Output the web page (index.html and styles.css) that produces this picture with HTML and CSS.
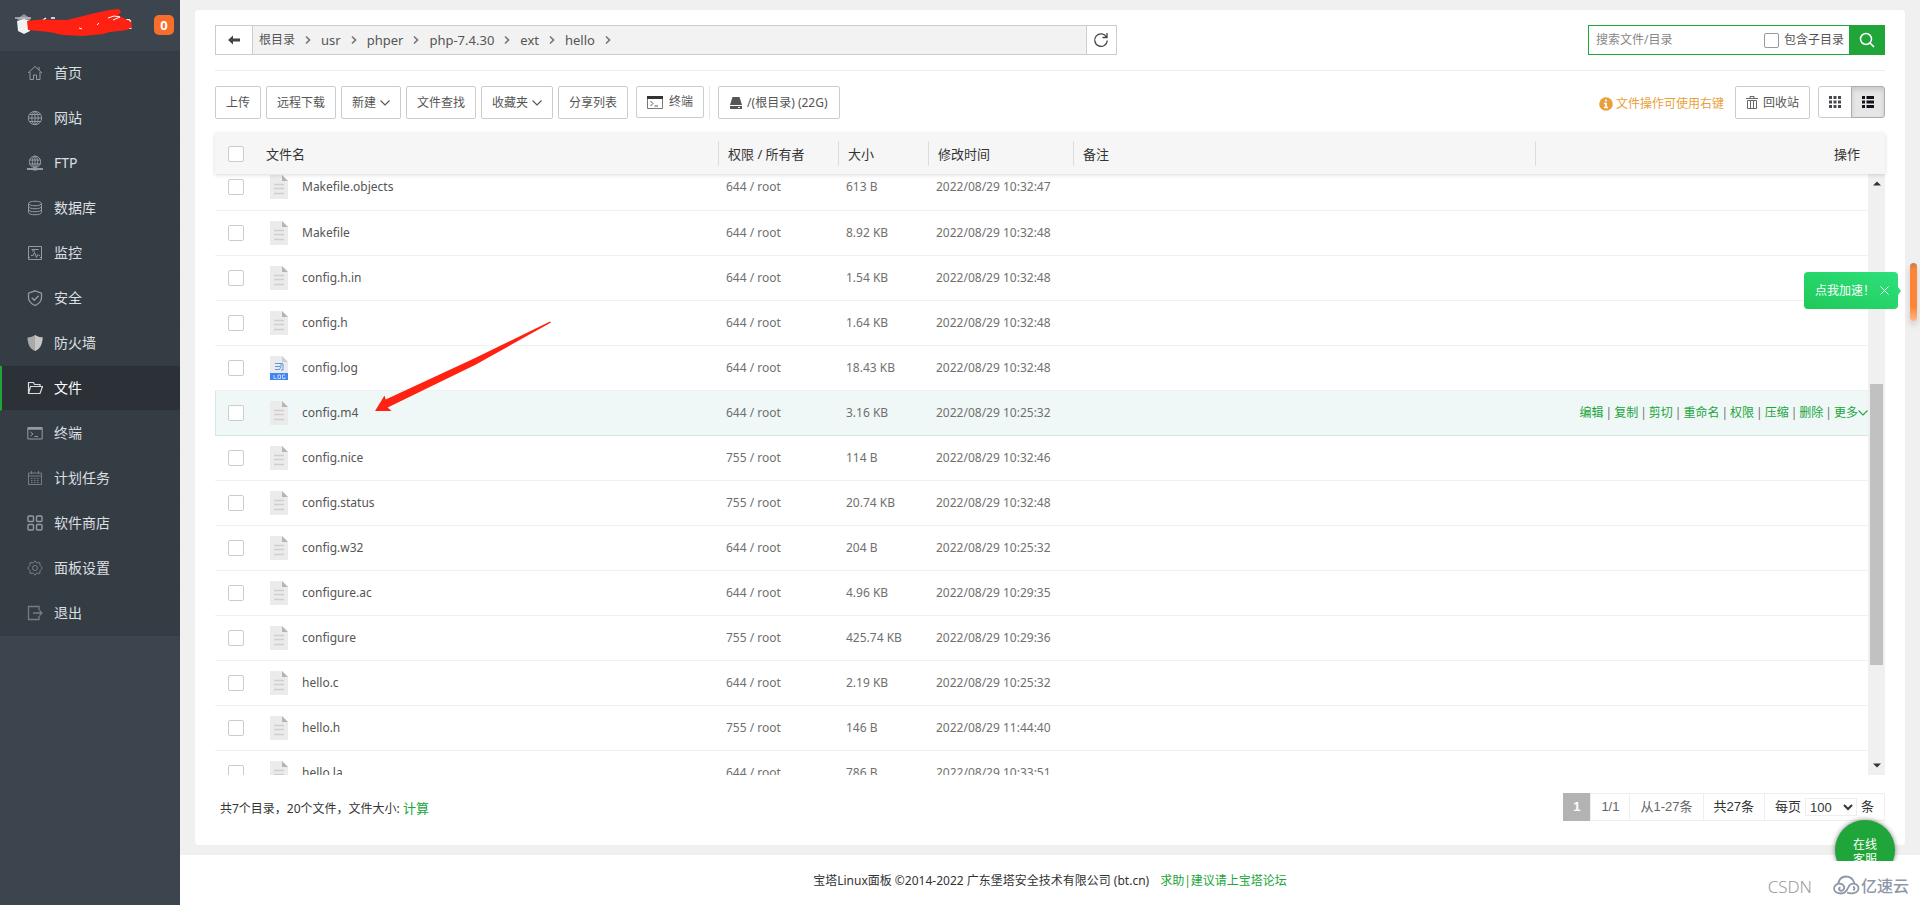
FILE: index.html
```
<!DOCTYPE html>
<html lang="zh-CN">
<head>
<meta charset="utf-8">
<title>文件 - 宝塔Linux面板</title>
<link rel="stylesheet" href="styles.css">
</head>
<body>
<svg class="defs" width="0" height="0" aria-hidden="true">
  <symbol id="doc" viewBox="0 0 18 24"><path d="M0 0h12l6 6v18H0z" fill="#ebebeb"/><path d="M12 0l6 6h-6z" fill="#b5b5b5"/><path d="M4 9.500h10M4 13.500h10M4 18.500h10" stroke="#cfcfcf" stroke-width="1.500"/></symbol>
  <symbol id="log" viewBox="0 0 18 24"><path d="M0 0h12l6 6v12H0z" fill="#ebebeb"/><path d="M12 0l6 6h-6z" fill="#d0d0d0"/><path d="M0 17h18v7H0z" fill="#4285f0"/><path d="M5 7.500h8M5 10.500h5M5 13.500h4M11 7v4l-2 3M13 8v6h-2" stroke="#5a94ee" fill="none"/><path d="M4 19v3.500h2.500M8 19h2.500v3.500H8zM15 19h-2.500v3.500H15V21" stroke="#dce9ff" fill="none" stroke-width=".8"/></symbol>
  <symbol id="down" viewBox="0 0 10 10"><path d="M.5 2.500L5 7l4.500-4.500" fill="none" stroke="currentColor" stroke-width="1.100"/></symbol>
  <symbol id="next" viewBox="0 0 8 10"><path d="M2 1.500L5.500 5 2 8.500" fill="none" stroke="#777" stroke-width="1.700"/></symbol>
</svg>
<div class="app">
  <aside class="sidebar">
    <header class="brand">
      <svg class="brand-mark" width="124" height="40" viewBox="0 0 124 40" aria-hidden="true">
        <path d="M2 14l7-5 7 5-3 2H5z" fill="#8e959b"/><path d="M0 13h16" stroke="#b7bcc0" stroke-width="1.500"/><path d="M2 16l7-2 6 2v10l-6 3-6-3z" fill="#f1f2f4"/>
        <path d="M28 15l3-2M36 13h4" stroke="#fff" stroke-width="1.500"/>
        <text x="109" y="24" fill="#fff" font-family="Noto Sans" font-size="14">2</text>
        <path d="M12 16L26 14.500 52 15 76 9 94 5 104 4 106 7 103 10 116 17 117 22 112 25 95 27 88 29 68 31 48 30 34 27 13 25z" fill="#ff2212"/>
        <path d="M93 13l6-2 6 1-7 3M82 20l2-2M64 23l3 1" stroke="#fff" fill="none"/>
      </svg>
      <span class="badge">0</span>
    </header>
    <nav class="menu">
      <a href="#"><svg class="mi" viewBox="0 0 16 16"><path d="M1 8l7-6.500L15 8M3 7v7.500h3.500V10h3v4.500H13V7M12 5V2"/></svg>首页</a>
      <a href="#"><svg class="mi" viewBox="0 0 16 16"><circle cx="8" cy="8" r="6.700"/><ellipse cx="8" cy="8" rx="3.200" ry="6.700"/><path d="M1.500 8h13M8 1.500v13M2.500 4.500h11M2.500 11.500h11"/></svg>网站</a>
      <a href="#"><svg class="mi" viewBox="0 0 16 16"><circle cx="8" cy="6.800" r="5.700"/><ellipse cx="8" cy="6.800" rx="2.700" ry="5.700"/><path d="M2.500 5h11M2.500 9h11M8 1v11"/><path d="M0 14h16M6 14.500h4" stroke-width="2"/></svg>FTP</a>
      <a href="#"><svg class="mi" viewBox="0 0 16 16"><ellipse cx="8" cy="3.500" rx="6.500" ry="2.300"/><path d="M1.500 3.500v9c0 3 13 3 13 0v-9M1.500 6.500c0 3 13 3 13 0M1.500 9.500c0 3 13 3 13 0"/></svg>数据库</a>
      <a href="#"><svg class="mi" viewBox="0 0 16 16"><path d="M1.500 1.500h13v13h-13zM4 10.500h2l1.500-3 2 5 1.300-3 1 1h1M4.500 4.500h7M5 6h3M1 12.500h2M13 12.500h2"/></svg>监控</a>
      <a href="#"><svg class="mi" viewBox="0 0 16 16"><path d="M8 .8l6.500 2.400v4.300c0 4-3 6.500-6.500 8-3.500-1.500-6.500-4-6.500-8V3.200zM4.800 7.800l2.500 2.500 4.300-4.500" stroke-width="1.300"/></svg>安全</a>
      <a href="#"><svg class="mi" viewBox="0 0 16 16"><path d="M8 0c2 1.500 4.500 2.500 7.500 2.500C15.500 9 13 14 8 16 3 14 .5 9 .5 2.500 3.500 2.500 6 1.500 8 0z" fill="#a8a9a9" stroke="none"/><path d="M8 0c2 1.500 4.500 2.500 7.500 2.500C15.500 9 13 14 8 16z" fill="#c6c6c6" stroke="none"/></svg>防火墙</a>
      <a href="#" class="active"><svg class="mi" viewBox="0 0 16 16"><path d="M1.500 13.500v-11h5l1 2H13v2M1.500 13.500l2-7h12l-2.500 7z" stroke-width="1.200"/></svg>文件</a>
      <a href="#"><svg class="mi" viewBox="0 0 16 16"><path d="M.8 2.500h14.400v11.500H.8zM3.500 7l2.500 2-2.500 2M7.500 11.500H11"/><path d="M1 3.500h14" stroke-width="2.500"/></svg>终端</a>
      <a href="#"><svg class="mi dim" viewBox="0 0 16 16"><path d="M1.500 3h13v11.500h-13zM1.500 6h13M4.500 1v3M11.500 1v3"/><path d="M4 8.500h8M4 10.500h8M4 12.500h8" stroke-dasharray="1.500 1.500"/></svg>计划任务</a>
      <a href="#"><svg class="mi" viewBox="0 0 16 16"><g stroke-width="1.400"><rect x="1" y="1" width="5.500" height="5.500" rx="1"/><rect x="9.500" y="1" width="5.500" height="5.500" rx="1"/><rect x="1" y="9.500" width="5.500" height="5.500" rx="1"/><rect x="9.500" y="9.500" width="5.500" height="5.500" rx="1"/></g></svg>软件商店</a>
      <a href="#"><svg class="mi dim" viewBox="0 0 16 16"><circle cx="8" cy="8" r="2.500"/><path d="M8 .8L9.800 3l3-.5.200 2.800L15.300 8 13 10.700l-.2 2.800-3-.5L8 15.200 6.200 13l-3 .5-.2-2.800L.7 8 3 5.300l.2-2.800 3 .5z"/></svg>面板设置</a>
      <a href="#"><svg class="mi dim" viewBox="0 0 16 16"><path d="M12 5V1.500H1.500v13H12V11M6 8h9M12.500 5.500L15 8l-2.500 2.500" stroke-width="1.300"/></svg>退出</a>
    </nav>
  </aside>

  <div class="page">
    <main class="card">
      <div class="top">
        <div class="path">
          <button class="back" aria-label="返回"><svg width="12" height="10" viewBox="0 0 12 10"><path d="M0 5l5-4.500v3h7v3H5v3z" fill="#444"/></svg></button>
          <div class="crumbs">
            <a href="#">根目录</a><svg><use href="#next"/></svg>
            <a href="#">usr</a><svg><use href="#next"/></svg>
            <a href="#">phper</a><svg><use href="#next"/></svg>
            <a href="#">php-7.4.30</a><svg><use href="#next"/></svg>
            <a href="#">ext</a><svg><use href="#next"/></svg>
            <a href="#">hello</a><svg><use href="#next"/></svg>
          </div>
          <button class="reload" aria-label="刷新"><svg width="16" height="16" viewBox="0 0 16 16"><path d="M13.500 5A6.300 6.300 0 1 0 14.300 8.500M14 1v4.500H9.500" fill="none" stroke="#444" stroke-width="1.300"/></svg></button>
        </div>
        <form class="search">
          <input class="search-text" type="text" placeholder="搜索文件/目录" aria-label="搜索文件/目录">
          <label><input type="checkbox" class="sub">包含子目录</label>
          <button type="button" aria-label="搜索"><svg width="16" height="16" viewBox="0 0 16 16"><circle cx="7" cy="7" r="5.500" fill="none" stroke="#fff" stroke-width="1.500"/><path d="M11 11l4 4" stroke="#fff" stroke-width="1.700"/></svg></button>
        </form>
      </div>

      <div class="tools">
        <button class="btn">上传</button>
        <button class="btn">远程下载</button>
        <button class="btn">新建<svg class="caret"><use href="#down"/></svg></button>
        <button class="btn">文件查找</button>
        <button class="btn">收藏夹<svg class="caret"><use href="#down"/></svg></button>
        <button class="btn">分享列表</button>
        <div class="term"><button class="btn"><svg class="term-icon" viewBox="0 0 16 13"><path d="M.5.500h15v12H.5z" fill="none" stroke="#777"/><path d="M3.500 5L6 7.500 3.500 10M7.500 10H11" fill="none" stroke="#555"/><path d="M0 1.500h16" stroke="#333" stroke-width="3"/></svg>终端</button></div>
        <button class="btn disk"><svg width="12" height="12" viewBox="0 0 12 12"><path d="M2.500 0h7L12 8H0zM0 9h12v3H0z" fill="#555"/><path d="M8 10.500h2" stroke="#fff"/></svg>/(根目录) (22G)</button>
        <div class="right">
          <span class="tip"><svg width="14" height="14" viewBox="0 0 14 14"><circle cx="7" cy="7" r="6.800" fill="#e9a03c"/><path d="M7 2.500v2M5 6.500h2v4M5 10.500h4" stroke="#fff" stroke-width="1.700" fill="none"/></svg>文件操作可使用右键</span>
          <button class="btn bin"><svg width="12" height="13" viewBox="0 0 12 13"><path d="M0 2.500h12M4 2V.500h4V2M1.500 4.500v8h9v-8zM4.500 5v7M7.500 5v7" fill="none" stroke="#666"/></svg>回收站</button>
          <div class="views">
            <button aria-label="图标视图"><svg width="12" height="12" viewBox="0 0 12 12"><path d="M0 1.500h12M0 6h12M0 10.500h12" stroke="#4a464e" stroke-width="3" stroke-dasharray="3 1.500"/></svg></button>
            <button class="on" aria-label="列表视图"><svg width="12" height="12" viewBox="0 0 12 12"><path d="M0 1.500h12M0 6h12M0 10.500h12" stroke="#17131c" stroke-width="3" stroke-dasharray="3 1.500 9 0"/></svg></button>
          </div>
        </div>
      </div>

      <table class="files head">
        <colgroup><col class="c-check"><col class="c-name"><col class="c-perm"><col class="c-size"><col class="c-time"><col><col class="c-ops-head"></colgroup>
        <thead><tr><th><input type="checkbox" class="ck" aria-label="全选"></th><th>文件名</th><th>权限 / 所有者</th><th>大小</th><th>修改时间</th><th>备注</th><th>操作</th></tr></thead>
      </table>

      <div class="list">
        <div class="rows">
          <table class="files body">
            <colgroup><col class="c-check"><col class="c-name"><col class="c-perm"><col class="c-size"><col class="c-time"><col><col class="c-ops"></colgroup>
            <tbody>
              <tr><td><input type="checkbox" class="ck" aria-label="Makefile.objects"></td><td><span class="file"><svg><use href="#doc"/></svg>Makefile.objects</span></td><td>644 / root</td><td>613 B</td><td>2022/08/29 10:32:47</td><td></td><td></td></tr>
              <tr><td><input type="checkbox" class="ck" aria-label="Makefile"></td><td><span class="file"><svg><use href="#doc"/></svg>Makefile</span></td><td>644 / root</td><td>8.92 KB</td><td>2022/08/29 10:32:48</td><td></td><td></td></tr>
              <tr><td><input type="checkbox" class="ck" aria-label="config.h.in"></td><td><span class="file"><svg><use href="#doc"/></svg>config.h.in</span></td><td>644 / root</td><td>1.54 KB</td><td>2022/08/29 10:32:48</td><td></td><td></td></tr>
              <tr><td><input type="checkbox" class="ck" aria-label="config.h"></td><td><span class="file"><svg><use href="#doc"/></svg>config.h</span></td><td>644 / root</td><td>1.64 KB</td><td>2022/08/29 10:32:48</td><td></td><td></td></tr>
              <tr><td><input type="checkbox" class="ck" aria-label="config.log"></td><td><span class="file"><svg><use href="#log"/></svg>config.log</span></td><td>644 / root</td><td>18.43 KB</td><td>2022/08/29 10:32:48</td><td></td><td></td></tr>
              <tr class="hover"><td><input type="checkbox" class="ck" aria-label="config.m4"></td><td><span class="file"><svg><use href="#doc"/></svg>config.m4</span></td><td>644 / root</td><td>3.16 KB</td><td>2022/08/29 10:25:32</td><td></td><td><span class="ops"><a href="#">编辑</a>|<a href="#">复制</a>|<a href="#">剪切</a>|<a href="#">重命名</a>|<a href="#">权限</a>|<a href="#">压缩</a>|<a href="#">删除</a>|<a href="#">更多<svg class="caret"><use href="#down"/></svg></a></span></td></tr>
              <tr><td><input type="checkbox" class="ck" aria-label="config.nice"></td><td><span class="file"><svg><use href="#doc"/></svg>config.nice</span></td><td>755 / root</td><td>114 B</td><td>2022/08/29 10:32:46</td><td></td><td></td></tr>
              <tr><td><input type="checkbox" class="ck" aria-label="config.status"></td><td><span class="file"><svg><use href="#doc"/></svg>config.status</span></td><td>755 / root</td><td>20.74 KB</td><td>2022/08/29 10:32:48</td><td></td><td></td></tr>
              <tr><td><input type="checkbox" class="ck" aria-label="config.w32"></td><td><span class="file"><svg><use href="#doc"/></svg>config.w32</span></td><td>644 / root</td><td>204 B</td><td>2022/08/29 10:25:32</td><td></td><td></td></tr>
              <tr><td><input type="checkbox" class="ck" aria-label="configure.ac"></td><td><span class="file"><svg><use href="#doc"/></svg>configure.ac</span></td><td>644 / root</td><td>4.96 KB</td><td>2022/08/29 10:29:35</td><td></td><td></td></tr>
              <tr><td><input type="checkbox" class="ck" aria-label="configure"></td><td><span class="file"><svg><use href="#doc"/></svg>configure</span></td><td>755 / root</td><td>425.74 KB</td><td>2022/08/29 10:29:36</td><td></td><td></td></tr>
              <tr><td><input type="checkbox" class="ck" aria-label="hello.c"></td><td><span class="file"><svg><use href="#doc"/></svg>hello.c</span></td><td>644 / root</td><td>2.19 KB</td><td>2022/08/29 10:25:32</td><td></td><td></td></tr>
              <tr><td><input type="checkbox" class="ck" aria-label="hello.h"></td><td><span class="file"><svg><use href="#doc"/></svg>hello.h</span></td><td>755 / root</td><td>146 B</td><td>2022/08/29 11:44:40</td><td></td><td></td></tr>
              <tr><td><input type="checkbox" class="ck" aria-label="hello.la"></td><td><span class="file"><svg><use href="#doc"/></svg>hello.la</span></td><td>644 / root</td><td>786 B</td><td>2022/08/29 10:33:51</td><td></td><td></td></tr>
            </tbody>
          </table>
        </div>
        <div class="scroll" aria-hidden="true">
          <svg width="8" height="5" viewBox="0 0 8 5"><path d="M0 4.500L4 .5l4 4z" fill="#333"/></svg>
          <div class="track"><div class="thumb"></div></div>
          <svg width="8" height="5" viewBox="0 0 8 5"><path d="M0 .5l4 4 4-4z" fill="#333"/></svg>
        </div>
      </div>

      <div class="foot">
        <div class="total">共7个目录，20个文件，文件大小: <a href="#">计算</a></div>
        <div class="pager">
          <span class="current">1</span><span class="soft">1/1</span><span class="soft">从1-27条</span><span>共27条</span>
          <label>每页<select aria-label="每页条数"><option>100</option></select>条</label>
        </div>
      </div>
    </main>
    <footer class="footer">宝塔Linux面板 ©2014-2022 广东堡塔安全技术有限公司 (bt.cn)<a href="#">求助|建议请上宝塔论坛</a></footer>
  </div>
</div>

<svg class="arrow" width="180" height="94" viewBox="0 0 180 94" aria-hidden="true"><path d="M2 92L11.500 76.500 12.700 80.500 100 40 177 2.500 178 3.500 102 46 14.700 88.500 18.500 92z" fill="#ff2212"/></svg>
<div class="boost"><span>点我加速！</span><button aria-label="关闭"><svg width="9" height="9" viewBox="0 0 9 9"><path d="M.5.500l8 8M8.500.500l-8 8" stroke="#e6ffee"/></svg></button></div>
<div class="orange"></div>
<div class="service"><a href="#">在线<br>客服</a></div>
<div class="marks">
  <span class="csdn">CSDN</span>
  <svg width="27" height="20" viewBox="0 0 27 20" fill="none" stroke="#8d98a8" stroke-width="1.800"><path d="M5 9C6 4 9 1.500 13 1.500S20 4 21.500 8M14 17.500c3 1.500 11 1.500 11.500-4 0-5-7-6.500-9.500-2.500-1.500 3-3 7.500-8 7.500-3.500 0-7-1.500-7-5C1.500 8.500 8 7 10.500 10.500c2.500 3.500-2 6.500-4 4.500-1.500-1.500 0-2.500 1-2.500M20 15c2 0 2-3 0-3"/></svg>
  <span class="yisu">亿速云</span>
</div>
</body>
</html>
```

FILE: styles.css
```
* { box-sizing: border-box; }
body { margin: 0; font: 12px/18px "Noto Sans", "Noto Sans CJK SC", sans-serif; color: #333; background: #f0f0f0; overflow: hidden; }
button, input, select { font: inherit; color: inherit; margin: 0; }
button { cursor: pointer; padding: 0; }
a { color: #20a53a; text-decoration: none; }
.defs { position: absolute; }
.app { display: flex; height: 100vh; min-height: 500px; }

.sidebar { flex: none; width: 180px; background: #3c444d; }
.brand { display: flex; align-items: center; height: 51px; padding: 0 6px 1px 15px; }
.brand-mark { flex: none; }
.badge { margin: 0 0 0 auto; width: 20px; height: 20px; border-radius: 5px; background: #f86d2b; color: #fff; font-weight: 700; font-size: 13px; line-height: 20px; text-align: center; }
.menu { background: #353d44; }
.menu a { display: flex; align-items: center; gap: 11px; height: 45px; padding-left: 25px; border-left: 2px solid transparent; border-bottom: 1px solid #343c43; color: #dcdfe1; font-size: 14px; line-height: 20px; }
.menu .active { background: #2c3138; border-left-color: #20a53a; color: #fff; }
.mi { width: 16px; height: 16px; fill: none; stroke: #959a9f; stroke-width: 1; }
.mi.dim { stroke: #767c82; }
.active .mi { stroke: #d8dadc; }

.page { flex: 1; min-width: 0; display: flex; flex-direction: column; }
.card { flex: 1; min-height: 0; display: flex; flex-direction: column; margin: 10px 15px; padding: 15px 20px 24px; background: #fff; border-radius: 4px; }
.top { display: flex; justify-content: space-between; height: 46px; padding-bottom: 15px; border-bottom: 1px solid #ececec; }
.path { display: flex; width: 54%; border: 1px solid #ccc; background: #f2f2f2; }
.path button { border: 0; background: #fff; display: flex; align-items: center; justify-content: center; }
.path .back { width: 37px; border-right: 1px solid #ccc; }
.path .reload { width: 30px; border-left: 1px solid #ccc; }
.crumbs { flex: 1; display: flex; align-items: center; gap: 9px; padding-left: 6px; font-size: 13px; }
.crumbs a { color: #555; }
.crumbs a:first-child { font-size: 12px; }
.crumbs svg { width: 8px; height: 10px; }
.search { display: flex; width: 297px; height: 30px; border: 1px solid #20a53a; }
.search-text { flex: 1; min-width: 0; border: 0; outline: 0; padding: 0 7px; background: #fff; }
.search-text::placeholder { color: #888; }
.search label { display: flex; align-items: center; gap: 5px; padding-right: 5px; color: #555; }
.search button { width: 35px; border: 0; background: #20a53a; display: flex; align-items: center; justify-content: center; }
.sub, .ck { appearance: none; width: 16px; height: 16px; border: 1px solid #ccc; border-radius: 2px; background: #fff; }
.sub { width: 15px; height: 15px; border-color: #999; }

.tools { display: flex; align-items: flex-start; gap: 5px; padding: 15px 0 14px; }
.btn { display: flex; align-items: center; height: 33px; padding: 0 10px; border: 1px solid #ccc; border-radius: 2px; background: #fff; color: #555; white-space: nowrap; }
.caret { width: 10px; height: 10px; }
.btn .caret { margin: 0 0 0 4px; }
.term { margin-left: 3px; padding-right: 5px; border-right: 1px solid #e8e8e8; height: 33px; }
.term .btn { height: 32px; padding: 0 10px; }
.term-icon { width: 16px; height: 13px; margin-right: 6px; }
.disk { margin-left: 3px; padding: 0 11px; }
.disk svg, .bin svg { margin-right: 5px; }
.right { margin-left: auto; display: flex; align-items: flex-start; }
.tip { display: flex; align-items: center; gap: 3px; height: 33px; padding-top: 2px; margin-right: 11px; color: #e9a03c; }
.views { display: flex; margin-left: 8px; }
.views button { display: flex; align-items: center; justify-content: center; width: 34px; height: 32px; border: 1px solid #ccc; border-radius: 3px 0 0 3px; background: #fff; }
.views .on { margin-left: -1px; border-color: #adadad; border-radius: 0 3px 3px 0; background: #e6e6e6; box-shadow: inset 0 3px 5px rgba(0, 0, 0, .125); }

.files { width: 100%; table-layout: fixed; border-collapse: collapse; }
.files th, .files td { padding: 0 8px; text-align: left; font-weight: 400; white-space: nowrap; }
.files th:first-child, .files td:first-child { padding-left: 13px; }
.files input { display: block; }
.c-check { width: 43px; }
.c-name { width: 460px; }
.c-perm { width: 120px; }
.c-size { width: 90px; }
.c-time { width: 145px; }
.c-ops { width: 333px; }
.c-ops-head { width: 350px; }
.head { flex: none; position: relative; background: #f6f6f6; box-shadow: 0 1px 4px rgba(0, 0, 0, .15); font-size: 13px; }
.head th { height: 41px; padding-left: 10px; }
.head th:nth-child(2) { padding-left: 8px; }
.head th:nth-child(n+3) { background: linear-gradient(#ddd, #ddd) left center / 1px 25px no-repeat; }
.head th:last-child { text-align: right; padding-right: 25px; }
.list { flex: 1; min-height: 0; display: flex; overflow: hidden; }
.rows { flex: 1; min-width: 0; }
.body { margin-top: -9px; color: #707070; }
.body tr { height: 45px; border-bottom: 1px solid #f0f0f0; }
.body td:last-child { padding: 0; }
.body .hover { background: #eff8f7; border-bottom-color: #d5e9e4; box-shadow: inset 1px 0 #d5e9e4; }
.file { display: flex; align-items: center; gap: 14px; padding-left: 4px; color: #555; }
.file svg { width: 18px; height: 24px; }
.ops { display: flex; align-items: center; justify-content: flex-end; gap: 2px; }
.ops a { display: flex; align-items: center; }
.scroll { flex: none; width: 17px; display: flex; flex-direction: column; align-items: center; padding: 7px 0; background: #f0f0f0; }
.track { flex: 1; width: 13px; padding: 198px 0 0; display: flex; flex-direction: column; }
.thumb { height: 281px; background: #c1c1c1; }

.foot { display: flex; justify-content: space-between; align-items: flex-start; padding-top: 18px; }
.total { padding: 6px 0 0 5px; }
.total a { font-size: 13px; }
.pager { display: flex; border: 1px solid #eee; font: 13px/26px "Liberation Sans", "Noto Sans CJK SC", sans-serif; }
.pager > * { padding: 0 10px; border-left: 1px solid #eee; }
.pager .current { margin: -1px 0 -1px -1px; padding: 1px 10px; border: 0; background: #b3b3b3; color: #fff; font-weight: 700; }
.pager .soft { color: #666; }
.pager label { display: flex; align-items: center; gap: 4px; }
.pager select { width: 52px; height: 18px; padding: 0; border: 1px solid #eee; background: #fff; line-height: 16px; }
.footer { flex: none; height: 50px; padding-top: 2px; display: flex; align-items: center; justify-content: center; gap: 11px; background: #fff; }

.arrow { position: absolute; left: 373px; top: 319px; }
.boost { position: absolute; right: 22px; top: 272px; display: flex; align-items: center; justify-content: space-between; width: 94px; height: 37px; padding: 0 9px 0 11px; border-radius: 4px; background: linear-gradient(20deg, #1fc958, #2ee07c); color: #fff; white-space: nowrap; }
.boost span { width: 60px; }
.boost::after { content: ""; position: absolute; left: 94px; top: 15px; border: 4px solid transparent; border-left: 3px solid #2ddd78; border-right: 0; }
.boost button { display: flex; border: 0; background: none; }
.orange { position: absolute; right: 3px; top: 263px; width: 7px; height: 58px; border-radius: 4px; background: linear-gradient(#b98055, #fd8537 6px, #fd8537 44px, #ffb988); box-shadow: 0 4px 6px rgba(0, 0, 0, .15); }
.service { position: absolute; right: 19px; bottom: 44px; width: 72px; height: 47px; padding: 6px; overflow: hidden; }
.service a { display: block; width: 60px; height: 60px; padding-top: 17px; border-radius: 50%; background: #20a53a; box-shadow: 0 0 5px rgba(0, 0, 0, .5); color: #fff; line-height: 15px; text-align: center; }
.marks { position: absolute; right: 11px; bottom: 7px; display: flex; align-items: center; gap: 1px; height: 26px; color: #8d98a8; }
.csdn { margin-right: 20px; padding-top: 3px; font: 300 17px/20px "Noto Sans", sans-serif; color: #999; }
.yisu { font: 500 16px/20px "Noto Sans CJK SC", sans-serif; }
```
